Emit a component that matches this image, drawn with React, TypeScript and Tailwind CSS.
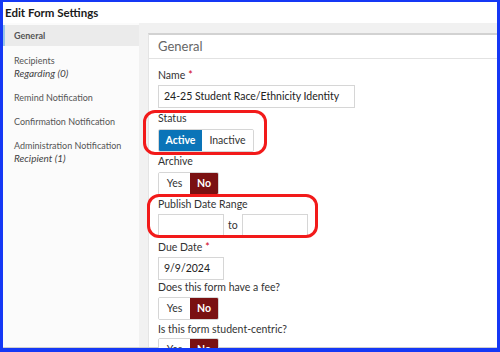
import type { ReactNode } from "react";

const SIDEBAR = [
  { label: "General", sub: null, active: true },
  { label: "Recipients", sub: "Regarding (0)" },
  { label: "Remind Notification", sub: null },
  { label: "Confirmation Notification", sub: null },
  { label: "Administration Notification", sub: "Recipient (1)" },
];

function Label({ children, req }: { children: ReactNode; req?: boolean }) {
  return (
    <div className="text-[10.5px] leading-[14px] text-[#333] whitespace-nowrap">
      {children}
      {req && <span className="text-[#d0021b] ml-[3px]">*</span>}
    </div>
  );
}

function YesNo() {
  return (
    <div className="flex h-[23px] w-fit border border-[#d6d6d6] rounded-[2px] overflow-hidden text-[10.5px]">
      <div className="w-[31px] flex items-center justify-center bg-white text-[#333]">Yes</div>
      <div className="w-[28px] flex items-center justify-center bg-[#7a1112] text-white font-bold">No</div>
    </div>
  );
}

function Box({ w, children }: { w: string; children?: ReactNode }) {
  return (
    <div className={`${w} h-[23px] border border-[#d6d6d6] bg-white text-[10.5px] text-[#222] px-[5px] flex items-center whitespace-nowrap overflow-hidden`}>
      {children}
    </div>
  );
}

export default function App() {
  return (
    <div
      className="w-[500px] h-[352px] overflow-hidden bg-white border-[#1538f5] border-t-[2px] border-l-[3px] border-r-[3px] border-b-[4px] flex flex-col relative"
      style={{ fontFamily: "Lato, 'Open Sans', sans-serif" }}
    >
      {/* Title */}
      <div className="h-[21px] shrink-0 flex items-center pl-[2px] text-[11.5px] font-bold text-[#1a1a1a]">
        Edit Form Settings
      </div>

      <div className="flex flex-1 min-h-0 border-b border-[#cfcfcf]">
        {/* Sidebar */}
        <div className="w-[136px] shrink-0 bg-[#fbfbfb] pt-[2px]">
          {SIDEBAR.map(item => (
            <div
              key={item.label}
              className={`px-[11px] text-[9px] leading-[12px] text-[#555] whitespace-nowrap ${
                item.active
                  ? "bg-[#ebebeb] border-l-2 border-[#9cc6e6] pl-[9px] h-[21px] flex items-center text-[#222] font-bold mb-[9px]"
                  : "mb-[12px]"
              }`}
            >
              {item.label}
              {item.sub && <div className="italic text-[10px] leading-[13px] text-[#444]">{item.sub}</div>}
            </div>
          ))}
        </div>

        {/* Main */}
        <div className="flex-1 bg-[#f1f1f1] pl-[9px] pt-[10px] min-w-0">
          <div className="bg-white h-full border-t-[2px] border-[#d2d2d2] border-l border-l-[#e4e4e4]">
            <div className="h-[24px] border-b border-[#e2e2e2] flex items-center pl-[9px] text-[13px] text-[#666]">
              General
            </div>
            <div className="pl-[9px] pt-[9px] flex flex-col">
              <Label req>Name</Label>
              <div className="mt-[3px] mb-[3px]">
                <Box w="w-[197px]">24-25 Student Race/Ethnicity Identity</Box>
              </div>

              <Label>Status</Label>
              <div className="mt-[4px] mb-[2px] flex h-[23px] w-fit border border-[#d6d6d6] rounded-[2px] overflow-hidden text-[10.5px]">
                <div className="w-[43px] flex items-center justify-center bg-[#0a74b8] text-white font-bold">Active</div>
                <div className="w-[51px] flex items-center justify-center bg-white text-[#333]">Inactive</div>
              </div>

              <Label>Archive</Label>
              <div className="mt-[4px] mb-[2px]">
                <YesNo />
              </div>

              <Label>Publish Date Range</Label>
              <div className="mt-[3px] mb-[3px] flex items-center">
                <Box w="w-[66px]" />
                <span className="text-[10.5px] text-[#333] mx-[4px]">to</span>
                <Box w="w-[66px]" />
              </div>

              <Label req>Due Date</Label>
              <div className="mt-[3px]">
                <Box w="w-[66px]">9/9/2024</Box>
              </div>

              <Label>Does this form have a fee?</Label>
              <div className="mt-[3px] mb-[2px]">
                <YesNo />
              </div>

              <Label>Is this form student-centric?</Label>
              <div className="mt-[2px]">
                <YesNo />
              </div>
            </div>
          </div>
        </div>
      </div>

      {/* Annotations */}
      <div className="absolute left-[140px] top-[108px] w-[124px] h-[45px] border-[3px] border-[#f21a1a] rounded-[12px]" />
      <div className="absolute left-[144px] top-[192px] w-[171px] h-[44px] border-[3px] border-[#f21a1a] rounded-[12px]" />
    </div>
  );
}
